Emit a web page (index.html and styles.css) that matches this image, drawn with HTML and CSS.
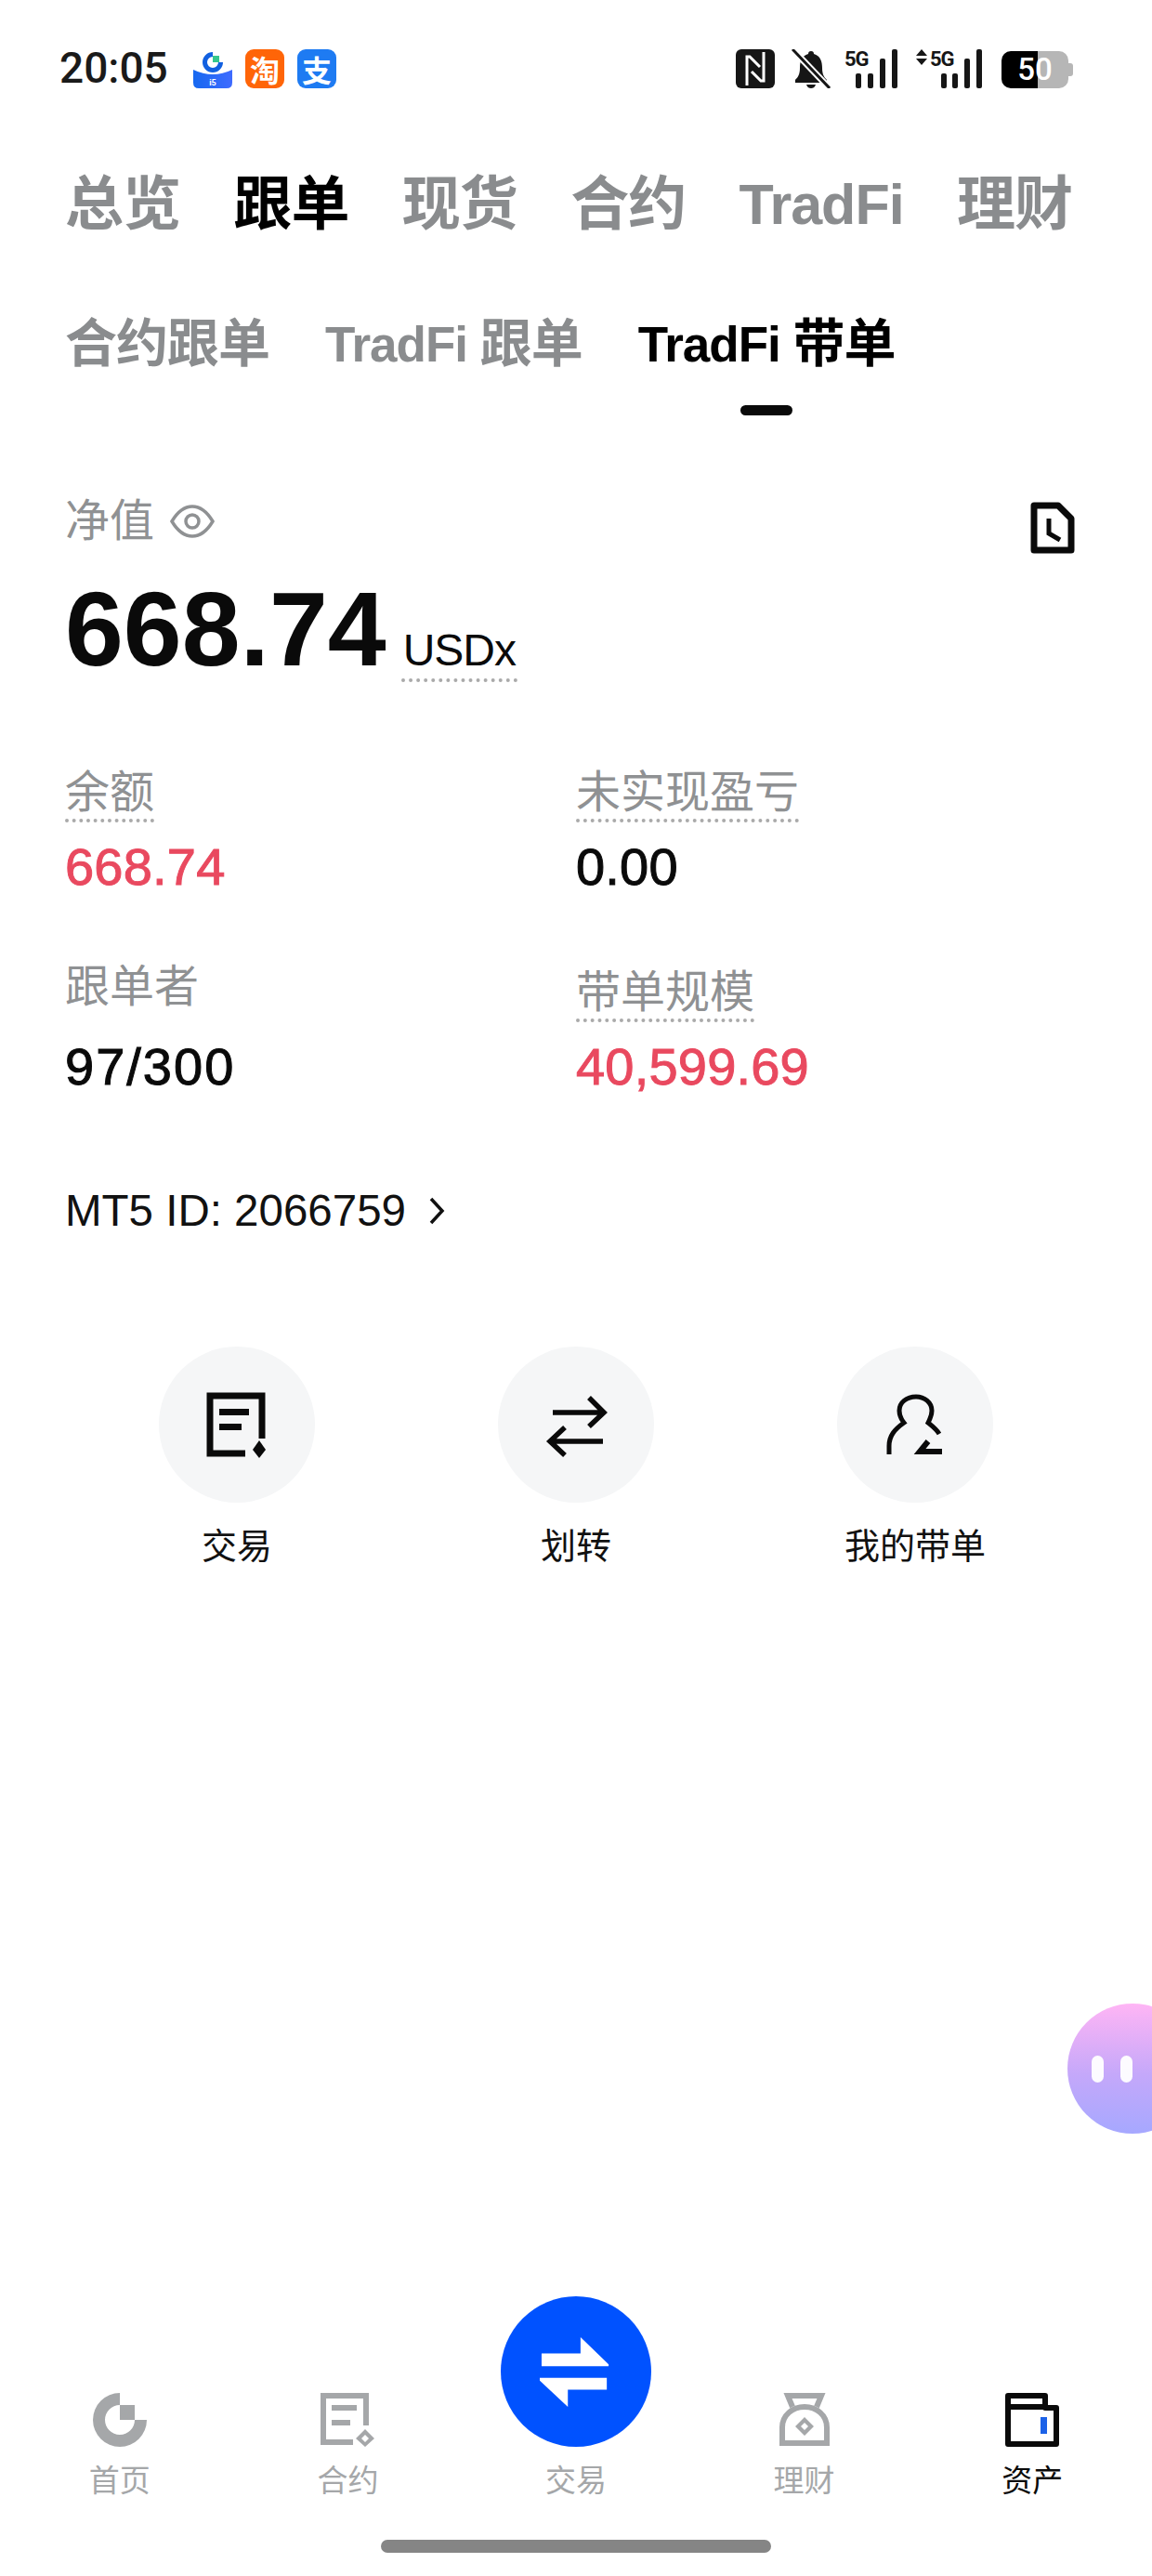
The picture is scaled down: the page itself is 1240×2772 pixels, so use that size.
FILE: index.html
```html
<!DOCTYPE html>
<html lang="zh">
<head>
  <meta charset="UTF-8">
  <title>TradFi 带单</title>
  <link rel="stylesheet" href="styles.css">
</head>
<body>
  <div class="page">
    <header class="status-bar">
      <div class="status-left">
        <span class="clock">20:05</span>
        <svg class="app-icon" viewBox="0 0 42 42">
          <defs>
            <linearGradient id="bowl" x1="0" y1="0" x2="1" y2="0">
              <stop offset="0" stop-color="#1668f0"/>
              <stop offset="1" stop-color="#3f6bff"/>
            </linearGradient>
          </defs>
          <path d="M0 22 Q21 32 42 22 V36 Q42 42 36 42 H6 Q0 42 0 36 Z" fill="url(#bowl)"/>
          <path d="M21 3 A11 11 0 1 0 32 14 H27 A6 6 0 1 1 21 8 Z" fill="#1260e0"/>
          <rect x="21" y="7" width="7" height="7" fill="#36c78e"/>
          <text class="app-small" x="21" y="39" text-anchor="middle">i5</text>
        </svg>
        <span class="app-badge taobao">淘</span>
        <span class="app-badge alipay">支</span>
      </div>
      <div class="status-right">
        <svg class="nfc" viewBox="0 0 42 42">
          <rect width="42" height="42" rx="6" fill="#161616"/>
          <path d="M12 39 V8 H15 L26 19 M30 3 V34 H27 L17 24" fill="none" stroke="#fff" stroke-width="3"/>
        </svg>
        <svg class="bell" viewBox="0 0 42 42">
          <path d="M21 2 C23 2 24 3 24 5 C31 7 33 13 33 20 C33 27 35 30 38 33 V36 H4 V33 C7 30 9 27 9 20 C9 13 11 7 18 5 C18 3 19 2 21 2 Z" fill="#161616"/>
          <path d="M16 38 H26 C25 41 23 42 21 42 C19 42 17 41 16 38 Z" fill="#161616"/>
          <path d="M1 0 L41 42" stroke="#fff" stroke-width="7"/>
          <path d="M1 0 L41 42" stroke="#161616" stroke-width="3"/>
        </svg>
        <svg class="signal" viewBox="0 0 56 43">
          <text class="signal-label" x="-1" y="19">5G</text>
          <rect x="11" y="27" width="6" height="16" rx="2"/>
          <rect x="24" y="27" width="6" height="16" rx="2"/>
          <rect x="37" y="11" width="6" height="32" rx="2"/>
          <rect x="50" y="1" width="6" height="42" rx="2"/>
        </svg>
        <svg class="signal wide" viewBox="0 0 71 43">
          <path d="M6 1 L12 8 H0 Z M6 18 L12 11 H0 Z"/>
          <text class="signal-label" x="15" y="19">5G</text>
          <rect x="27" y="27" width="6" height="16" rx="2"/>
          <rect x="39" y="27" width="6" height="16" rx="2"/>
          <rect x="52" y="11" width="6" height="32" rx="2"/>
          <rect x="65" y="1" width="6" height="42" rx="2"/>
        </svg>
        <div class="battery">50</div>
      </div>
    </header>

    <nav class="main-tabs">
      <a>总览</a>
      <a class="active">跟单</a>
      <a>现货</a>
      <a>合约</a>
      <a class="latin">TradFi</a>
      <a>理财</a>
    </nav>

    <nav class="sub-tabs">
      <a><span>合约跟单</span></a>
      <a><span><span class="latin">TradFi </span>跟单</span></a>
      <a class="active"><span><span class="latin">TradFi </span>带单</span><i class="tab-line"></i></a>
    </nav>

    <section class="summary">
      <div class="net-head">
        <div class="net-label">
          <span>净值</span>
          <svg class="eye" viewBox="0 0 48 36">
            <path d="M2 18 C8 8 15 2 24 2 C33 2 40 8 46 18 C40 28 33 34 24 34 C15 34 8 28 2 18 Z" fill="none" stroke="#8f9193" stroke-width="3.5"/>
            <circle cx="24" cy="18" r="7" fill="none" stroke="#8f9193" stroke-width="3.5"/>
          </svg>
        </div>
        <svg class="history" viewBox="0 0 48 56">
          <path d="M4 4 H30 L44 18 V52 H4 Z" fill="none" stroke="#0a0a0a" stroke-width="7" stroke-linejoin="round"/>
          <path d="M20 18 V34 L32 41" fill="none" stroke="#0a0a0a" stroke-width="5"/>
        </svg>
      </div>
      <div class="net-value">
        <span class="amount">668.74</span>
        <span class="unit">USDx</span>
      </div>

      <div class="stats">
        <div class="stat">
          <span class="stat-label dotted">余额</span>
          <span class="stat-value red">668.74</span>
        </div>
        <div class="stat">
          <span class="stat-label dotted">未实现盈亏</span>
          <span class="stat-value">0.00</span>
        </div>
        <div class="stat">
          <span class="stat-label plain">跟单者</span>
          <span class="stat-value spaced">97/300</span>
        </div>
        <div class="stat">
          <span class="stat-label dotted">带单规模</span>
          <span class="stat-value red">40,599.69</span>
        </div>
      </div>

      <div class="mt-id">
        <span>MT5 ID: 2066759</span>
        <svg class="chevron" viewBox="0 0 18 32">
          <path d="M3 3 L15 16 L3 29" fill="none" stroke="#111" stroke-width="3.5"/>
        </svg>
      </div>
    </section>

    <section class="actions">
      <div class="action">
        <div class="action-circle">
          <svg class="action-icon" viewBox="0 0 66 70">
            <path d="M60 50 V4 H4 V66 H42" fill="none" stroke="#0a0a0a" stroke-width="7"/>
            <rect x="14" y="18" width="32" height="7"/>
            <rect x="14" y="34" width="24" height="7"/>
            <path d="M57 52 L64 62 L57 71 L50 62 Z"/>
          </svg>
        </div>
        <span>交易</span>
      </div>
      <div class="action">
        <div class="action-circle">
          <svg class="action-icon" viewBox="0 0 66 70">
            <path d="M8 22 H62 M47 6 L63 22 L47 37 M62 53 H6 M21 38 L5 53 L21 68" fill="none" stroke="#0a0a0a" stroke-width="5.5"/>
          </svg>
        </div>
        <span>划转</span>
      </div>
      <div class="action">
        <div class="action-circle">
          <svg class="action-icon" viewBox="0 0 66 70">
            <path d="M5 67 V58 C5 47 11 40 21 33 C17 28 16 24 16 20 C16 11 24 5 34 5 C43 5 51 11 51 20 C51 25 49 29 47 33 C52 37 56 40 59 45" fill="none" stroke="#0a0a0a" stroke-width="5"/>
            <path d="M47 53 L38 64 H62" fill="none" stroke="#0a0a0a" stroke-width="6"/>
          </svg>
        </div>
        <span>我的带单</span>
      </div>
    </section>

    <div class="float-bubble">
      <i></i>
      <i></i>
    </div>

    <footer class="bottom">
      <nav class="bottom-nav">
        <a>
          <svg class="nav-icon" viewBox="0 0 58 58">
            <path d="M29 0 A29 29 0 1 0 58 29 H45 A16 16 0 1 1 29 13 Z" fill="#a5a7a9"/>
            <rect x="29" y="13" width="16" height="16" fill="#a5a7a9"/>
          </svg>
          <span>首页</span>
        </a>
        <a>
          <svg class="nav-icon" viewBox="0 0 58 58">
            <path d="M49 35 V3 H3 V53 H35" fill="none" stroke="#a5a7a9" stroke-width="6"/>
            <rect x="12" y="13" width="27" height="6" fill="#a5a7a9"/>
            <rect x="12" y="29" width="20" height="6" fill="#a5a7a9"/>
            <path d="M48 39 L58 49 L48 58 L38 49 Z M48 45 L44 49 L48 53 L52 49 Z" fill="#a5a7a9" fill-rule="evenodd"/>
          </svg>
          <span>合约</span>
        </a>
        <a class="trade">
          <div class="trade-circle">
            <svg class="trade-icon" viewBox="0 0 80 80">
              <path d="M2 20 H45 V2 L76 32 V34 H2 Z M74 47 V60 H31 V79 L0 50 V47 Z" fill="#fff"/>
            </svg>
          </div>
          <span>交易</span>
        </a>
        <a>
          <svg class="nav-icon" viewBox="0 0 58 58">
            <path d="M5 54 V37 C5 24 16 15 29 15 C42 15 53 24 53 37 V54 Z" fill="none" stroke="#a5a7a9" stroke-width="6"/>
            <path d="M16 15 L11 3 H47 L42 15" fill="none" stroke="#a5a7a9" stroke-width="6"/>
            <path d="M29 26 L39 36 L29 46 L19 36 Z M29 32 L25 36 L29 40 L33 36 Z" fill="#a5a7a9" fill-rule="evenodd"/>
          </svg>
          <span>理财</span>
        </a>
        <a class="active">
          <svg class="nav-icon" viewBox="0 0 58 58">
            <path d="M3 3 H43 V16 H55 V55 H3 Z M3 15 H43" fill="none" stroke="#0a0a0a" stroke-width="6" stroke-linejoin="round"/>
            <rect x="38" y="26" width="7" height="18" fill="#1c62e8"/>
          </svg>
          <span>资产</span>
        </a>
      </nav>
      <div class="home-bar"></div>
    </footer>
  </div>
</body>
</html>
```

FILE: styles.css
```css
* {
  box-sizing: border-box;
}

body {
  margin: 0;
  background: #fff;
  font-family: "Liberation Sans", "Noto Sans CJK SC", sans-serif;
  color: #0a0a0a;
}

.page {
  position: relative;
  width: 1240px;
  height: 2772px;
  display: flex;
  flex-direction: column;
  overflow: hidden;
}

/* status bar */
.status-bar {
  display: flex;
  justify-content: space-between;
  align-items: center;
  padding: 52px 90px 0 64px;
}

.status-left {
  display: flex;
  align-items: center;
}

.clock {
  font-family: Roboto, sans-serif;
  font-weight: 500;
  font-size: 46px;
  line-height: 43px;
  color: #1a1a1a;
  width: 144px;
}

.app-icon {
  width: 42px;
  height: 42px;
  margin-right: 14px;
}

.app-small {
  font-family: Roboto, sans-serif;
  font-size: 9px;
  font-weight: 700;
  fill: #fff;
}

.app-badge {
  width: 42px;
  height: 42px;
  border-radius: 9px;
  display: flex;
  align-items: center;
  justify-content: center;
  font-family: "Noto Sans CJK SC", sans-serif;
  font-weight: 700;
  font-size: 32px;
  line-height: 42px;
  color: #fff;
  margin-right: 14px;
}

.taobao {
  background: #ff6508;
}

.alipay {
  background: #1e7bf2;
  margin-right: 0;
}

.status-right {
  display: flex;
  align-items: center;
}

.nfc {
  width: 42px;
  height: 42px;
  margin-right: 18px;
}

.bell {
  width: 42px;
  height: 42px;
  margin-right: 16px;
}

.signal {
  width: 56px;
  height: 43px;
  fill: #161616;
  margin-right: 20px;
}

.signal.wide {
  width: 71px;
  margin-right: 21px;
}

.signal-label {
  font-family: Roboto, sans-serif;
  font-weight: 700;
  font-size: 22px;
  letter-spacing: -1px;
}

.battery {
  position: relative;
  width: 72px;
  height: 40px;
  margin-top: 3px;
  border-radius: 10px;
  background: linear-gradient(90deg, #000 0, #000 39px, #b6b6b6 39px);
  color: #fff;
  font-family: Roboto, sans-serif;
  font-weight: 500;
  font-size: 33px;
  line-height: 40px;
  text-align: center;
}

.battery::after {
  content: "";
  position: absolute;
  right: -5px;
  top: 13px;
  width: 5px;
  height: 14px;
  border-radius: 0 3px 3px 0;
  background: #b6b6b6;
}

/* tabs */
.main-tabs {
  display: flex;
  justify-content: space-between;
  align-items: baseline;
  margin: 89px 86px 0 70px;
  font-size: 63px;
  line-height: 70px;
  font-weight: 700;
  letter-spacing: -1px;
  color: #8a8c8e;
}

.main-tabs .active {
  color: #000;
}

.main-tabs .latin {
  font-size: 61px;
}

.sub-tabs {
  display: flex;
  align-items: flex-start;
  gap: 60px;
  margin: 83px 0 0 70px;
  font-size: 56px;
  line-height: 64px;
  font-weight: 700;
  letter-spacing: -1px;
  color: #8a8c8e;
}

.sub-tabs .latin {
  font-size: 53px;
}

.sub-tabs a {
  display: flex;
  flex-direction: column;
  align-items: center;
  gap: 33px;
}

.sub-tabs .active {
  color: #000;
}

.tab-line {
  width: 56px;
  height: 11px;
  border-radius: 6px;
  background: #0a0a0a;
}

/* summary */
.summary {
  padding: 0 70px;
  margin-top: 84px;
}

.net-head {
  display: flex;
  justify-content: space-between;
  align-items: center;
  height: 60px;
}

.net-label {
  display: flex;
  align-items: center;
  gap: 17px;
  font-size: 48px;
  line-height: 60px;
  color: #8f9193;
}

.eye {
  width: 48px;
  height: 36px;
}

.history {
  width: 48px;
  height: 56px;
  margin-right: 13px;
  margin-top: 13px;
}

.net-value {
  display: flex;
  align-items: baseline;
  gap: 16px;
  margin-top: 30px;
  height: 112px;
  line-height: 112px;
}

.amount {
  font-size: 113px;
  font-weight: 700;
}

.unit {
  font-size: 48px;
  line-height: 52px;
  letter-spacing: -1px;
  padding: 0 2px 4px;
  border-bottom: 4px dotted #aaa;
  margin-bottom: -8px;
}

.stats {
  display: grid;
  grid-template-columns: 550px 1fr;
  row-gap: 78px;
  margin-top: 95px;
}

.stat {
  display: flex;
  flex-direction: column;
  align-items: flex-start;
  gap: 16px;
}

.stat-label {
  font-size: 48px;
  line-height: 50px;
  padding-bottom: 3px;
  color: #8f9193;
}

.stat-label.dotted {
  border-bottom: 4px dotted #aaa;
}

.stat-label.plain {
  margin: -6px 0 6px;
  padding-bottom: 3px;
  border-bottom: 4px solid transparent;
}

.stat-value {
  font-size: 56px;
  line-height: 64px;
  letter-spacing: 0.2px;
  -webkit-text-stroke: 1px currentColor;
  color: #0a0a0a;
}

.stat-value.red {
  color: #e9495f;
}

.stat-value.spaced {
  letter-spacing: 2px;
}

.mt-id {
  display: flex;
  align-items: center;
  gap: 24px;
  margin-top: 93px;
  font-size: 47.5px;
  line-height: 60px;
  color: #111;
}

.chevron {
  width: 18px;
  height: 32px;
}

/* round actions */
.actions {
  display: flex;
  justify-content: center;
  margin-top: 116px;
}

.action {
  width: 365px;
  display: flex;
  flex-direction: column;
  align-items: center;
  gap: 22px;
  font-size: 38px;
  line-height: 50px;
  color: #111;
}

.action-circle {
  width: 168px;
  height: 168px;
  border-radius: 50%;
  background: #f5f6f7;
  display: flex;
  align-items: center;
  justify-content: center;
}

.action-icon {
  width: 66px;
  height: 70px;
  fill: #0a0a0a;
  overflow: visible;
}

.float-bubble {
  position: absolute;
  left: 1149px;
  top: 2156px;
  width: 140px;
  height: 140px;
  border-radius: 70px;
  background: linear-gradient(180deg, #ffb5f5 0%, #c4a8fa 55%, #a6a8ff 100%);
  display: flex;
  gap: 18px;
  align-items: center;
  padding-left: 26px;
}

.float-bubble i {
  width: 13px;
  height: 29px;
  border-radius: 7px;
  background: #fff;
  opacity: 0.95;
}

/* bottom nav */
.bottom {
  margin-top: auto;
  padding-bottom: 25px;
}

.bottom-nav {
  display: grid;
  grid-template-columns: repeat(5, 1fr);
  padding: 0 6px;
  align-items: end;
}

.bottom-nav a {
  display: flex;
  flex-direction: column;
  align-items: center;
  gap: 17px;
  font-size: 33px;
  line-height: 40px;
  color: #a5a7a9;
}

.bottom-nav .active {
  color: #0a0a0a;
}

.nav-icon {
  width: 58px;
  height: 58px;
}

.trade-circle {
  width: 162px;
  height: 162px;
  border-radius: 50%;
  background: #0052ff;
  display: flex;
  align-items: center;
  justify-content: center;
}

.trade-icon {
  width: 78px;
  height: 78px;
}

.home-bar {
  width: 420px;
  height: 14px;
  border-radius: 7px;
  background: #858585;
  margin: 43px auto 0;
}
```
